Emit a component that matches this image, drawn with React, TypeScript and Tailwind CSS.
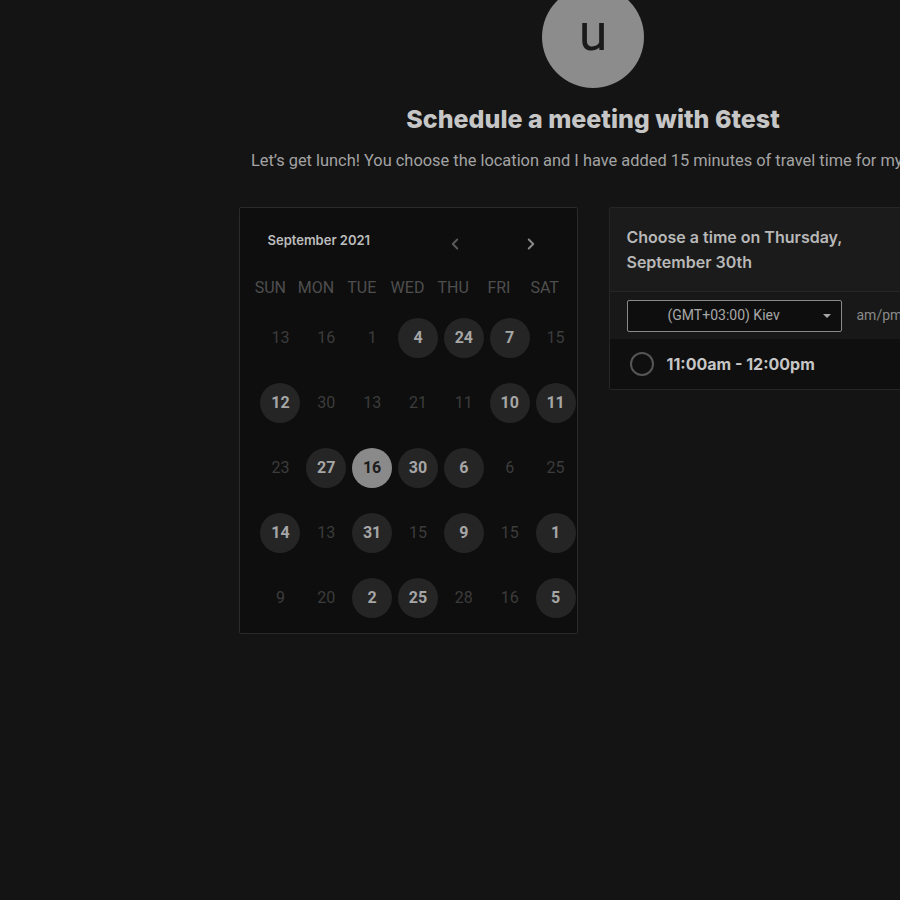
import { ChevronLeft, ChevronRight } from "lucide-react";

type Day = { n: number; s: "u" | "a" | "sel" };

const weekdays = ["SUN", "MON", "TUE", "WED", "THU", "FRI", "SAT"];

const rows: Day[][] = [
  [{ n: 13, s: "u" }, { n: 16, s: "u" }, { n: 1, s: "u" }, { n: 4, s: "a" }, { n: 24, s: "a" }, { n: 7, s: "a" }, { n: 15, s: "u" }],
  [{ n: 12, s: "a" }, { n: 30, s: "u" }, { n: 13, s: "u" }, { n: 21, s: "u" }, { n: 11, s: "u" }, { n: 10, s: "a" }, { n: 11, s: "a" }],
  [{ n: 23, s: "u" }, { n: 27, s: "a" }, { n: 16, s: "sel" }, { n: 30, s: "a" }, { n: 6, s: "a" }, { n: 6, s: "u" }, { n: 25, s: "u" }],
  [{ n: 14, s: "a" }, { n: 13, s: "u" }, { n: 31, s: "a" }, { n: 15, s: "u" }, { n: 9, s: "a" }, { n: 15, s: "u" }, { n: 1, s: "a" }],
  [{ n: 9, s: "u" }, { n: 20, s: "u" }, { n: 2, s: "a" }, { n: 25, s: "a" }, { n: 28, s: "u" }, { n: 16, s: "u" }, { n: 5, s: "a" }],
];

const DayCell = ({ day }: { day: Day }) => {
  if (day.s === "u") {
    return (
      <div className="flex h-[65px] items-center justify-center text-[16px] text-[#3c3c3c]">
        {day.n}
      </div>
    );
  }
  return (
    <div className="flex h-[65px] items-center justify-center">
      <div
        className={
          day.s === "sel"
            ? "flex h-10 w-10 shrink-0 items-center justify-center rounded-full bg-[#8a8a8a] text-[16px] font-bold text-[#1c1c1c]"
            : "flex h-10 w-10 shrink-0 items-center justify-center rounded-full bg-[#252525] text-[16px] font-bold text-[#a6a6a6]"
        }
      >
        {day.n}
      </div>
    </div>
  );
};

const App = () => {
  return (
    <div className="h-[900px] w-[900px] overflow-hidden bg-[#141414] font-['Roboto',sans-serif]">
      <div className="-mt-[14px] flex w-[1186px] flex-col items-center">
        {/* avatar */}
        <div className="flex h-[102px] w-[102px] items-center justify-center rounded-full bg-[#8c8c8c] pb-2 text-[52px] leading-none text-[#1a1a1a] font-['Roboto',sans-serif]">
          u
        </div>

        <h1 className="mt-[15px] text-[25px] leading-8 font-extrabold text-[#c6c6c6] font-['Inter',sans-serif]">
          Schedule a meeting with 6test
        </h1>
        <p className="mt-[14px] whitespace-nowrap text-[16.4px] leading-6 text-[#a3a3a3]">
          Let’s get lunch! You choose the location and I have added 15 minutes of travel time for my trip.
        </p>

        <div className="mt-[34px] flex items-start gap-[31px]">
          {/* calendar */}
          <div className="h-[427px] w-[339px] overflow-hidden rounded-[2px] border border-[#2a2a2a] bg-[#0e0e0e]">
            <div className="flex items-center pt-[20px] pl-[28px]">
              <span className="w-[178px] text-[13px] font-semibold text-[#bdbdbd] font-['Inter',sans-serif]">
                September 2021
              </span>
              <div className="mt-[7px] flex items-center gap-[58px] text-[#5a5a5a]">
                <ChevronLeft size={18} strokeWidth={2.5} />
                <ChevronRight size={18} strokeWidth={2.5} className="text-[#8a8a8a]" />
              </div>
            </div>
            <div className="mt-[23px] grid w-[328px] grid-cols-7 pl-[8px]">
              {weekdays.map((w) => (
                <div key={w} className="text-center text-[16px] text-[#4e4e4e]">
                  {w}
                </div>
              ))}
            </div>
            <div className="mt-[5px] grid w-[339px] grid-cols-7 pl-[18px]">
              {rows.map((r, i) =>
                r.map((d, j) => <DayCell key={`${i}-${j}`} day={d} />)
              )}
            </div>
          </div>

          {/* times */}
          <div className="w-[339px] overflow-hidden rounded-[2px] border border-[#262626] bg-[#1b1b1b]">
            <div className="px-[17px] pt-[17px] pb-[16px] text-[16px] leading-[25px] font-semibold text-[#b8b8b8] font-['Inter',sans-serif]">
              Choose a time on Thursday,
              <br />
              September 30th
            </div>
            <div className="flex h-[48px] items-center border-t border-[#262626] bg-[#181818] px-[17px]">
              <div className="flex h-[32px] w-[215px] items-center rounded-[2px] border border-[#8a8a8a] bg-[#0e0e0e] pr-[10px] pl-[40px]">
                <span className="flex-1 text-[14px] text-[#a8a8a8]">(GMT+03:00) Kiev</span>
                <span className="h-0 w-0 border-x-[4px] border-t-[4px] border-x-transparent border-t-[#a8a8a8]" />
              </div>
              <span className="ml-[15px] text-[14px] text-[#8a8a8a]">am/pm</span>
            </div>
            <div className="flex h-[50px] items-center gap-[13px] bg-[#0f0f0f] px-[20px]">
              <span className="h-[24px] w-[24px] rounded-full border-2 border-[#555555]" />
              <span className="text-[16px] font-bold text-[#c6c6c6] font-['Inter',sans-serif]">
                11:00am - 12:00pm
              </span>
            </div>
          </div>
        </div>
      </div>
    </div>
  );
};

export default App;
